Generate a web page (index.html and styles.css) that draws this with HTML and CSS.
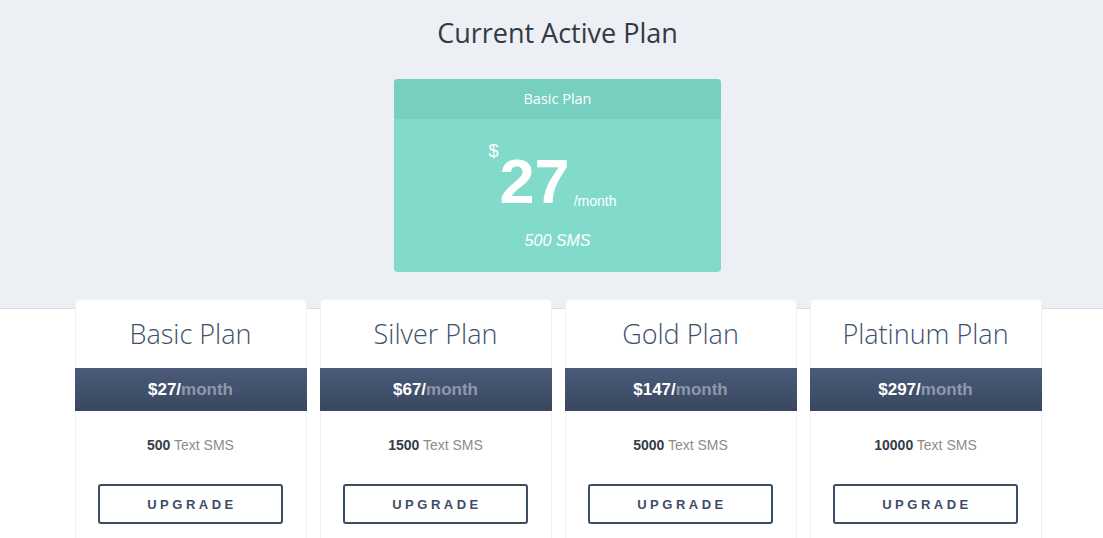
FILE: index.html
```html
<!DOCTYPE html>
<html>
<head>
<meta charset="utf-8">
<link rel="stylesheet" href="styles.css">
</head>
<body>
<div class="hero">
  <div class="inner">
    <h1 class="title">Current Active Plan</h1>
    <div class="active">
      <div class="active-head">Basic Plan</div>
      <div class="active-body">
        <div class="amount"><span class="cur">$</span><span class="num">27</span><span class="per">/month</span></div>
        <div class="sms">500 SMS</div>
      </div>
    </div>
  </div>
</div>
<div class="plans">
  <div class="card">
    <div class="name">Basic Plan</div>
    <div class="price"><span class="p">$27/</span><span class="m">month</span></div>
    <div class="feat"><b>500</b> Text SMS</div>
    <button class="btn">UPGRADE</button>
  </div>
  <div class="card">
    <div class="name">Silver Plan</div>
    <div class="price"><span class="p">$67/</span><span class="m">month</span></div>
    <div class="feat"><b>1500</b> Text SMS</div>
    <button class="btn">UPGRADE</button>
  </div>
  <div class="card">
    <div class="name">Gold Plan</div>
    <div class="price"><span class="p">$147/</span><span class="m">month</span></div>
    <div class="feat"><b>5000</b> Text SMS</div>
    <button class="btn">UPGRADE</button>
  </div>
  <div class="card">
    <div class="name">Platinum Plan</div>
    <div class="price"><span class="p">$297/</span><span class="m">month</span></div>
    <div class="feat"><b>10000</b> Text SMS</div>
    <button class="btn">UPGRADE</button>
  </div>
</div>
</body>
</html>
```
FILE: styles.css
```css
html, body {
  margin: 0;
  padding: 0;
  background: #ffffff;
  overflow: hidden;
}
body {
  font-family: "Liberation Sans", Arial, sans-serif;
}
.hero {
  background: #eceff4;
  height: 309px;
  border-bottom: 1px solid #d9dce3;
  box-sizing: border-box;
  padding-left: 12px;
}
.inner {
  display: flex;
  flex-direction: column;
  align-items: center;
}
.title {
  margin: 0;
  padding-top: 15px;
  height: 79px;
  box-sizing: border-box;
  font-family: "Open Sans", sans-serif;
  font-weight: 400;
  font-size: 27px;
  line-height: 36px;
  color: #333a44;
}
.active {
  width: 327px;
  height: 193px;
  border-radius: 4px;
  overflow: hidden;
  background: #82dbca;
}
.active-head {
  height: 40px;
  background: #76cfbf;
  color: #ffffff;
  font-family: "Open Sans", sans-serif;
  font-size: 14.5px;
  line-height: 40px;
  text-align: center;
}
.active-body {
  display: flex;
  flex-direction: column;
  align-items: center;
  color: #ffffff;
}
.amount {
  display: flex;
  align-items: flex-start;
  height: 112px;
  padding-right: 10px;
  padding-top: 21px;
  box-sizing: border-box;
}
.cur {
  font-size: 18px;
  line-height: 20px;
  margin-top: 1px;
}
.num {
  font-size: 63px;
  font-weight: bold;
  line-height: 63px;
  margin-top: 10px;
  margin-left: 1px;
}
.per {
  font-size: 14px;
  line-height: 16px;
  margin-top: 53px;
  margin-left: 4px;
}
.sms {
  font-size: 16px;
  font-style: italic;
  line-height: 20px;
  margin-top: 0px;
}
.plans {
  display: flex;
  justify-content: center;
  gap: 13px;
  padding-left: 13px;
  margin-top: -10px;
}
.card {
  width: 232px;
  height: 260px;
  background: #ffffff;
  border: 1px solid #f0f1f3;
  border-bottom: none;
  border-radius: 5px 5px 0 0;
  box-sizing: border-box;
  display: flex;
  flex-direction: column;
  align-items: center;
}
.name {
  height: 68px;
  width: 100%;
  text-align: center;
  font-family: "Open Sans", sans-serif;
  font-weight: 300;
  font-size: 27px;
  line-height: 67px;
  color: #3e4f6b;
}
.price {
  width: calc(100% + 2px);
  height: 43px;
  line-height: 43px;
  text-align: center;
  background: linear-gradient(#4b5b79, #39475f);
  font-size: 17px;
  font-weight: bold;
}
.price .p { color: #ffffff; }
.price .m { color: #8d98ac; }
.feat {
  margin-top: 25px;
  font-size: 14px;
  line-height: 18px;
  color: #8c8c8c;
}
.feat b {
  color: #333c4c;
}
.btn {
  margin-top: 30px;
  width: 185px;
  height: 40px;
  background: #ffffff;
  border: 2px solid #3e4d67;
  border-radius: 3px;
  color: #3e4d67;
  font-family: "Liberation Sans", Arial, sans-serif;
  font-size: 13px;
  font-weight: bold;
  letter-spacing: 3.5px;
  padding: 0 0 0 3px;
}
```
